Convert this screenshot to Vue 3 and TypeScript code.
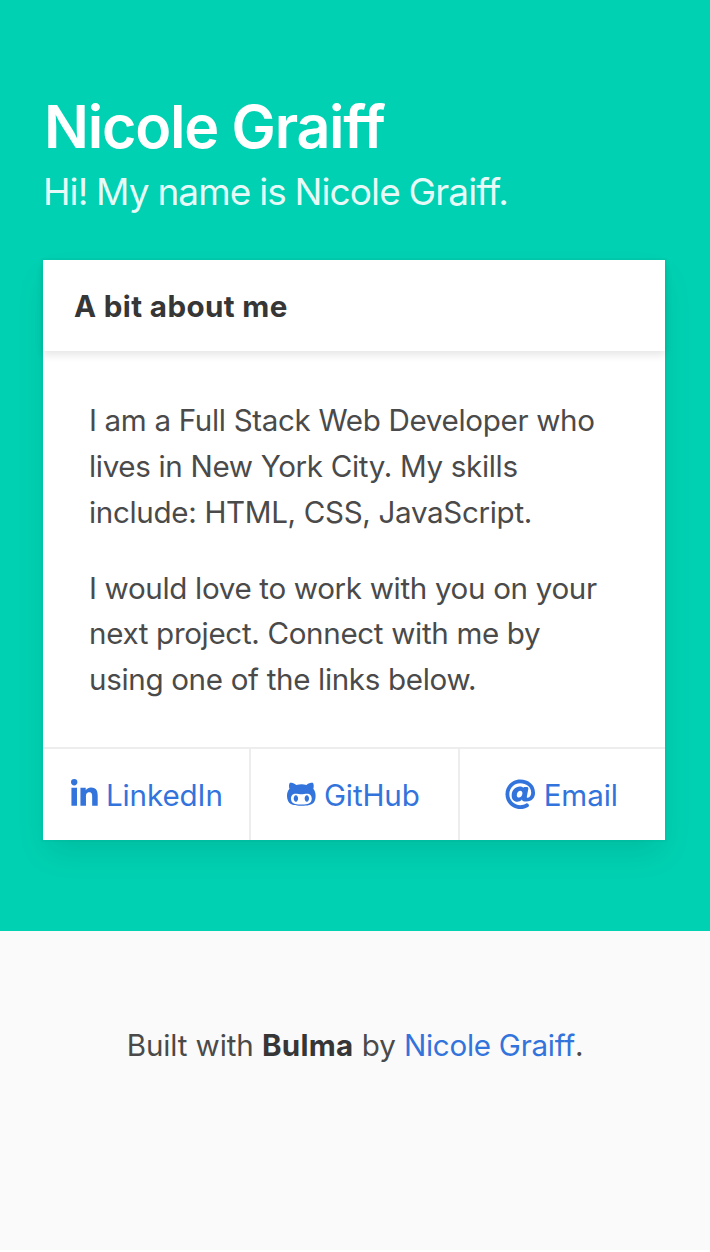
<script setup lang="ts">
interface ContactLink {
  label: string
  kind: string
  viewBox: string
  path: string
}

const links: ContactLink[] = [
  {
    label: 'LinkedIn',
    kind: 'linkedin',
    viewBox: '0 0 448 512',
    path: 'M100.28 448H7.4V148.9h92.88zM53.79 108.1C24.09 108.1 0 83.5 0 53.8a53.79 53.79 0 0 1 107.58 0c0 29.7-24.1 54.3-53.79 54.3zM447.9 448h-92.68V302.4c0-34.7-.7-79.2-48.29-79.2-48.29 0-55.69 37.7-55.69 76.7V448h-92.78V148.9h89.08v40.8h1.3c12.4-23.5 42.69-48.3 87.88-48.3 94 0 111.28 61.9 111.28 142.3V448z',
  },
  {
    label: 'GitHub',
    kind: 'github',
    viewBox: '0 0 480 512',
    path: 'M186.1 328.7c0 20.9-10.9 55.1-36.7 55.1s-36.7-34.2-36.7-55.1 10.9-55.1 36.7-55.1 36.7 34.2 36.7 55.1zM480 278.2c0 31.9-3.2 65.7-17.5 95-37.9 76.6-142.1 74.8-216.7 74.8-75.8 0-186.2 2.7-225.6-74.8-14.6-29-20.2-63.1-20.2-95 0-41.9 13.9-81.5 41.5-113.6-5.2-15.8-7.7-32.4-7.7-48.8 0-21.5 4.9-32.3 14.6-51.8 45.3 0 74.3 9 108.8 36 29-6.9 58.8-10 88.7-10 27 0 54.2 2.9 80.4 9.2 34-26.7 63-35.2 107.8-35.2 9.8 19.5 14.6 30.3 14.6 51.8 0 16.4-2.6 32.7-7.7 48.2 27.5 32.4 39 72.3 39 114.2zm-64.3 50.5c0-43.9-26.7-82.6-73.5-82.6-18.9 0-37 3.4-56 6-14.9 2.3-29.8 3.2-45.1 3.2-15.2 0-30.1-.9-45.1-3.2-18.7-2.6-37-6-56-6-46.8 0-73.5 38.7-73.5 82.6 0 87.8 80.4 101.3 150.4 101.3h48.2c70.3 0 150.6-13.4 150.6-101.3zm-82.6-55.1c-25.8 0-36.7 34.2-36.7 55.1s10.9 55.1 36.7 55.1 36.7-34.2 36.7-55.1-10.9-55.1-36.7-55.1z',
  },
  {
    label: 'Email',
    kind: 'email',
    viewBox: '0 0 512 512',
    path: 'M256 8C118.941 8 8 118.919 8 256c0 137.059 110.919 248 248 248 48.154 0 95.342-14.14 135.408-40.223 12.005-7.815 14.625-24.288 5.552-35.372l-10.177-12.433c-7.671-9.371-21.179-11.667-31.373-5.129C325.92 429.757 291.314 440 256 440c-101.458 0-184-82.542-184-184S154.542 72 256 72c100.139 0 184 57.619 184 160 0 38.786-21.093 79.742-58.17 83.693-17.349-.454-16.91-12.857-13.476-30.024l23.433-121.11C394.653 149.75 383.308 136 368.225 136h-44.981a13.518 13.518 0 0 0-13.432 11.993l-.01.092c-14.697-17.901-40.448-21.775-59.971-21.775-74.58 0-137.831 62.234-137.831 151.46 0 65.303 36.785 105.87 96 105.87 26.984 0 57.369-15.637 74.991-38.333 9.522 34.104 40.613 34.104 70.71 34.104C462.609 379.41 504 307.798 504 232 504 95.653 394.023 8 256 8zm-21.68 304.43c-22.249 0-36.07-15.623-36.07-40.771 0-44.993 30.779-72.729 58.63-72.729 22.292 0 35.601 15.241 35.601 40.77 0 45.061-33.875 72.73-58.161 72.73z',
  },
]
</script>

<template>
  <main class="page">
    <section class="hero">
      <h1 class="title">Nicole Graiff</h1>
      <p class="subtitle">Hi! My name is Nicole Graiff.</p>
      <article class="card">
        <header class="card-header">A bit about me</header>
        <div class="card-content">
          <p>I am a Full Stack Web Developer who<br />lives in New York City. My skills<br />include: HTML, CSS, JavaScript.</p>
          <p>I would love to work with you on your<br />next project. Connect with me by<br />using one of the links below.</p>
        </div>
        <nav class="card-footer">
          <a v-for="link in links" :key="link.kind" class="card-link" :class="link.kind">
            <svg class="icon" :viewBox="link.viewBox" aria-hidden="true"><path :d="link.path" /></svg>
            <span>{{ link.label }}</span>
          </a>
        </nav>
      </article>
    </section>
    <footer class="footer">
      <p>Built with <strong>Bulma</strong> by <a>Nicole Graiff</a>.</p>
    </footer>
  </main>
</template>

<style>
body {
  background: #fff;
}
</style>

<style scoped>
.page {
  font-family: Inter, "Liberation Sans", sans-serif;
  font-size: 29.6px;
  line-height: 45.75px;
  letter-spacing: -0.12px;
  color: #4a4a4a;
  white-space: nowrap;
}
.hero {
  box-sizing: border-box;
  height: 931px;
  padding: 93px 45px 0 43px;
  background: #00d1b2;
}
.title {
  margin: 0;
  padding-left: 1px;
  font-size: 59.2px;
  font-weight: 600;
  line-height: 68px;
  letter-spacing: -1.25px;
  color: #fff;
}
.subtitle {
  margin: 7px 0 44px;
  font-size: 37px;
  line-height: 48px;
  letter-spacing: -0.9px;
  word-spacing: -0.8px;
  color: rgba(255, 255, 255, 0.92);
}
.card {
  display: flex;
  flex-direction: column;
  height: 580px;
  background: #fff;
  box-shadow: 0 15px 30px -4px rgba(10, 10, 10, 0.1), 0 0 0 2px rgba(10, 10, 10, 0.02);
}
.card-header {
  box-sizing: border-box;
  height: 91px;
  padding: 24px 31px;
  font-weight: 700;
  letter-spacing: 0.37px;
  color: #363636;
  box-shadow: 0 4px 8px rgba(10, 10, 10, 0.1);
}
.card-content {
  flex: 1;
  padding: 47.3px 46px 0;
  letter-spacing: -0.34px;
}
.card-content p {
  margin: 0;
}
.card-content p + p {
  margin-top: 30px;
}
.card-footer {
  display: grid;
  grid-template-columns: 206px 209px 1fr;
  height: 91px;
  border-top: 2px solid #ededed;
}
.card-link {
  box-sizing: border-box;
  display: flex;
  justify-content: center;
  padding-top: 24px;
  color: #3273dc;
}
.card-link + .card-link {
  border-left: 2px solid #ededed;
}
.icon {
  height: 30.5px;
  margin: 6px 8px 0 0;
  fill: currentColor;
}
.card-link.linkedin {
  padding-left: 2px;
}
.card-link.github {
  padding-right: 2px;
}
.card-link.email {
  padding-right: 2px;
}
.footer {
  box-sizing: border-box;
  height: 319px;
  padding-top: 92px;
  background: #fafafa;
  text-align: center;
}
.footer p {
  margin: 0;
}
.footer strong {
  font-weight: 700;
  letter-spacing: 0.3px;
  color: #363636;
}
.footer a {
  letter-spacing: -0.28px;
  color: #3273dc;
}
</style>
